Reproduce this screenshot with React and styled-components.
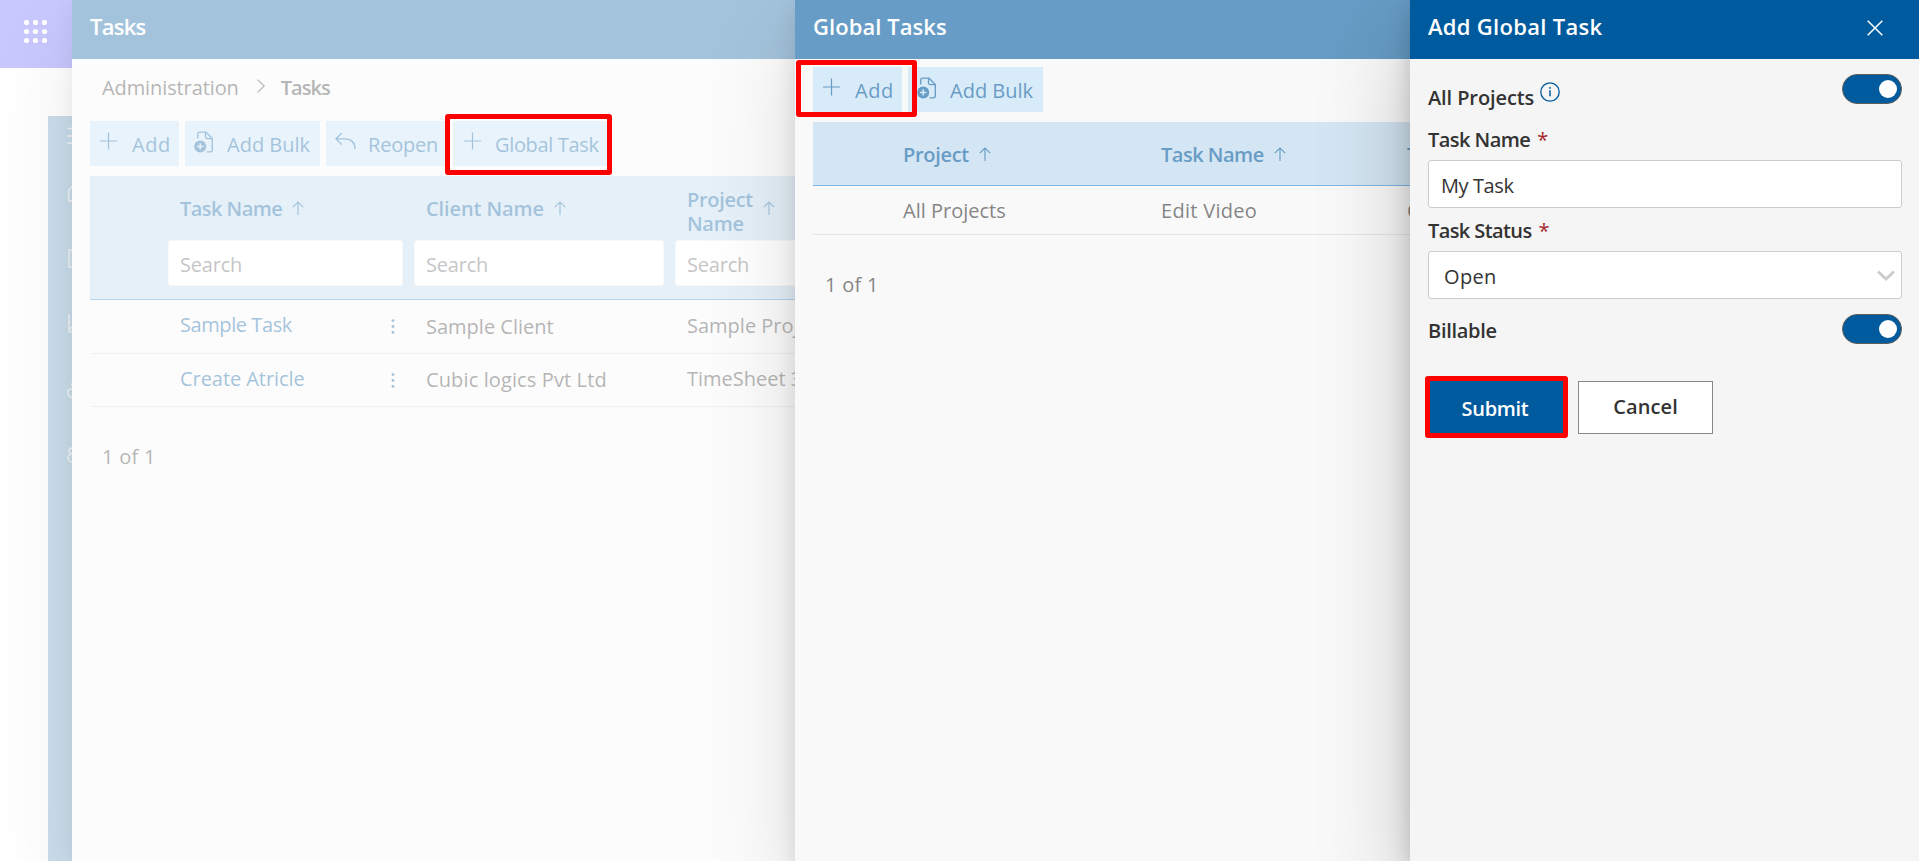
import React from 'react';
import styled, { createGlobalStyle } from 'styled-components';

const PRIMARY = '#005a9e';

const GlobalStyle = createGlobalStyle`
  *, *::before, *::after { box-sizing: border-box; }
  body {
    margin: 0;
    overflow: hidden;
    background: #fff;
    color: #333;
    font-family: "Open Sans", "Noto Sans", sans-serif;
    font-size: 20px;
    line-height: 24px;
  }
`;

const Screen = styled.main`
  position: relative;
  display: flex;
  width: 1919px;
  height: 861px;
  overflow: hidden;
`;

const shadow = (k) =>
  `0 38.4px 86.4px rgba(0,0,0,${0.22 * k}), 0 7.2px 21.6px rgba(0,0,0,${0.18 * k})`;

/* App shell visible at the left of the stacked panels */
const Shell = styled.div`
  display: flex;
  flex-direction: column;
  flex: none;
  width: 72px;
`;

const Launcher = styled.div`
  display: flex;
  align-items: flex-start;
  height: 68px;
  padding: 20px 0 0 24px;
  background: #c8c8ff;
`;

const Rail = styled.nav`
  flex: 1;
  display: flex;
  flex-direction: column;
  margin: 48px 0 0 48px;
  padding: 8px 0 0 19px;
  background: #cbdeec;
  overflow: hidden;
`;

const RailItem = styled.div`
  flex: none;
  height: ${(p) => p.$h}px;
`;

const Panel = styled.section`
  position: relative;
  z-index: ${(p) => p.$level};
  flex: none;
  width: ${(p) => p.$width}px;
  background: #f5f5f5;
  box-shadow: ${(p) => shadow(p.$shadow)};
`;

const Clip = styled.div`
  position: relative;
  height: 100%;
  overflow: hidden;
  &::after {
    content: "";
    position: absolute;
    inset: 0;
    background: rgba(255, 255, 255, ${(p) => p.$veil});
  }
`;

const PanelHeader = styled.header`
  display: flex;
  justify-content: space-between;
  align-items: center;
  height: 59px;
  padding: 0 36px 4px 18px;
  background: ${PRIMARY};
  color: #fff;
`;

const Title = styled.h2`
  margin: 0;
  padding-bottom: 4px;
  font-size: 22px;
  font-weight: 600;
  line-height: 26px;
  letter-spacing: ${(p) => p.$ls || 0}px;
`;

const Text = styled.span`
  white-space: nowrap;
  font-weight: ${(p) => (p.$strong ? 600 : 400)};
  letter-spacing: ${(p) => p.$ls || 0}px;
  margin-top: ${(p) => p.$drop || 0}px;
`;

const Content = styled.div`
  width: 1100px;
  padding: ${(p) => p.$top || 0}px 0 0 18px;
`;

const Breadcrumb = styled.div`
  display: flex;
  align-items: center;
  height: 57px;
  margin-bottom: 5px;
  padding-left: 12px;
  svg { margin: -3px 16px 0 18px; }
`;

const Toolbar = styled.div`
  display: flex;
  gap: 6px;
  height: 45px;
  margin-bottom: 10px;
`;

const ToolButton = styled.button`
  display: flex;
  align-items: center;
  width: ${(p) => p.$width}px;
  padding: 1px 0 0 ${(p) => p.$pad}px;
  border: 0;
  background: #bfdef4;
  color: ${PRIMARY};
  font: inherit;
  text-align: left;
  svg { flex: none; margin-right: ${(p) => p.$gap}px; }
`;

const TableHead = styled.div`
  height: ${(p) => p.$height}px;
  background: #b7d5eb;
  border-bottom: 1px solid #2b88d8;
  color: ${PRIMARY};
`;

const Columns = styled.div`
  display: grid;
  grid-template-columns: ${(p) => p.$cols};
  align-items: center;
  height: ${(p) => p.$height}px;
  color: ${(p) => p.$color || 'inherit'};
`;

const Row = styled(Columns)`
  border-bottom: 1px solid #d5d5d5;
`;

const Cell = styled.div`
  display: flex;
  align-items: center;
  padding-left: ${(p) => p.$pad || 0}px;
  color: ${(p) => (p.$link ? PRIMARY : 'inherit')};
`;

const SortIcon = styled.span`
  display: flex;
  margin-left: 10px;
`;

const TwoLines = styled.span`
  display: grid;
  margin-bottom: -7px;
  width: 66px;
`;

const SearchBox = styled.div`
  width: calc(100% - 11px);
  height: 46px;
  padding: 13px 0 0 11px;
  line-height: 22px;
  border: 1px solid #ececec;
  border-radius: 3px;
  background: #fff;
  color: #5e5e5e;
  letter-spacing: -0.2px;
`;

const MoreButton = styled.span`
  display: flex;
  margin-left: auto;
  margin-right: 19px;
`;

const Pager = styled.div`
  height: ${(p) => p.$height}px;
  padding-left: 12px;
  display: flex;
  align-items: center;
`;

/* Add Global Task form */
const Form = styled.form`
  display: flex;
  flex-direction: column;
  padding: 15px 17px 0 18px;
`;

const ToggleRow = styled.div`
  display: flex;
  justify-content: space-between;
  height: ${(p) => p.$height}px;
`;

const ToggleLabel = styled.label`
  display: flex;
  align-items: flex-start;
  height: 24px;
  margin-top: ${(p) => p.$top}px;
  svg { margin: -4px 0 0 6px; }
`;

const Toggle = styled.span`
  display: flex;
  justify-content: flex-end;
  align-items: center;
  width: 60px;
  height: 30px;
  padding-right: 4px;
  border: 1px solid #5f5e5c;
  border-radius: 15px;
  background: ${PRIMARY};
  &::after {
    content: "";
    width: 18px;
    height: 18px;
    border-radius: 50%;
    background: #fff;
  }
`;

const FieldLabel = styled.label`
  display: flex;
  height: 24px;
  margin-bottom: 8px;
`;

const Required = styled.span`
  margin-left: 7px;
  color: #a4262c;
  font-weight: 400;
`;

const Field = styled.div`
  display: flex;
  align-items: center;
  justify-content: space-between;
  height: 48px;
  margin-bottom: ${(p) => p.$after}px;
  padding: 3px 6px 0 ${(p) => p.$pad}px;
  border: 1px solid #ccc;
  border-radius: 3px;
  background: #fff;
  svg { margin-top: -1px; }
`;

const Actions = styled.div`
  display: flex;
  gap: 15px;
  margin-top: 37px;
`;

const ActionButton = styled.button`
  width: 135px;
  height: 53px;
  padding: ${(p) => p.$padding};
  border: ${(p) => (p.$primary ? '0' : '1px solid #8a8886')};
  background: ${(p) => (p.$primary ? PRIMARY : '#fff')};
  color: ${(p) => (p.$primary ? '#fff' : '#333')};
  font: inherit;
`;

/* Red call-out frame drawn over the panels */
const Callout = styled.div`
  position: absolute;
  z-index: 10;
  left: ${(p) => p.$x}px;
  top: ${(p) => p.$y}px;
  width: ${(p) => p.$w}px;
  height: ${(p) => p.$h}px;
  border: 5px solid #f00;
  border-radius: 3px;
`;

const Waffle = () => (
  <svg width="24" height="24" fill="#fff">
    {[2.5, 11.5, 20.5].map((y) =>
      [2.5, 11.5, 20.5].map((x) => <circle key={`${x}${y}`} cx={x} cy={y} r="2.6" />)
    )}
  </svg>
);

const Stroke = ({ w, h, d, sw = 1.2 }) => (
  <svg width={w} height={h} fill="none" stroke="currentColor" strokeWidth={sw}>
    <path d={d} />
  </svg>
);

const PlusIcon = () => <Stroke w={18} h={24} d="M8.5 0.5V17.5M0 9H17" />;

const BulkIcon = () => (
  <svg width="20" height="26" fill="none" stroke="currentColor" strokeWidth="1.3">
    <path d="M3.7 7.5V3.2Q3.7 1.2 5.7 1.2H12L18.3 7.5V18.8Q18.3 20.8 16.3 20.8H12.6" />
    <path d="M11.5 1.2V5.8Q11.5 7.6 13.3 7.6H18.3" />
    <circle cx="6.2" cy="15.4" r="6" fill="currentColor" stroke="none" />
    <path d="M6.2 12.2V18.6M3 15.4H9.4" stroke="#bfdef4" strokeWidth="1.5" />
  </svg>
);

const UndoIcon = () => <Stroke w={21} h={25} sw={1.3} d="M6.8 1L0.9 6.8L6.8 12.6M1 6.8H9C15.5 6.8 20 9.5 20 17" />;

const ArrowUp = () => (
  <SortIcon>
    <Stroke w={12} h={14} sw={1.1} d="M6 14V1M0.8 6.2L6 1L11.2 6.2" />
  </SortIcon>
);

const InfoIcon = () => (
  <svg width="20" height="20" fill="none" stroke={PRIMARY} strokeWidth="1.3">
    <circle cx="10" cy="10" r="9.2" />
    <path d="M10 8.2V14.2" strokeWidth="1.5" />
    <circle cx="10" cy="5.9" r="0.9" fill={PRIMARY} stroke="none" />
  </svg>
);

const Dots = () => (
  <MoreButton>
    <svg width="4" height="15" fill="currentColor">
      <circle cx="2" cy="1.6" r="1.4" />
      <circle cx="2" cy="7.5" r="1.4" />
      <circle cx="2" cy="13.4" r="1.4" />
    </svg>
  </MoreButton>
);

const RAIL = [
  { h: 61, d: 'M0.5 4.5H20M0.5 12H20M0.5 19H20' },
  { h: 64, d: 'M6 1L2.5 4Q1.6 5 1.6 6V14.5Q1.6 16 3.5 16H16' },
  { h: 65, d: 'M2 1H18V18H2ZM5.5 1V18' },
  { h: 69, d: 'M2 0V18H18M2 16L6 12' },
  { h: 64, d: 'M5 0V3M5 6C1 6 0 8 1 11C2 14 5 15 8 15' },
  { h: 60, d: 'M5 1A3 3 0 1 0 5 7A4 4 0 1 0 5 15' },
];

const COLS_TASKS = '78px 246px 261px 261px';
const COLS_GLOBAL = '90px 258px 246px 200px';

const ROWS = [
  { h: 54, task: ['Sample Task', -0.42], client: ['Sample Client', 0], project: 'Sample Project', shift: -4 },
  { h: 53, task: ['Create Atricle', -0.06], client: ['Cubic logics Pvt Ltd', 0.12], project: 'TimeSheet 365', shift: -3 },
];

export default function App() {
  return (
    <Screen>
      <GlobalStyle />
      <Shell>
        <Launcher><Waffle /></Launcher>
        <Rail>
          {RAIL.map((r) => (
            <RailItem key={r.d} $h={r.h}>
              <svg width="20" height="20" fill="none" stroke="#f3f6f8" strokeWidth="1.5"><path d={r.d} /></svg>
            </RailItem>
          ))}
        </Rail>
      </Shell>

      <Panel $level={1} $width={723} $shadow={0.36}>
        <Clip $veil={0.64}>
          <PanelHeader><Title $ls={-0.75}>Tasks</Title></PanelHeader>
          <Content>
            <Breadcrumb>
              <Text $ls={-0.1}>Administration</Text>
              <Stroke w={8} h={14} d="M0.6 0.6L7.2 7L0.6 13.4" />
              <Text $strong $ls={-1}>Tasks</Text>
            </Breadcrumb>
            <Toolbar>
              <ToolButton $width={89} $pad={10} $gap={14}><PlusIcon /><Text $ls={0.5} $drop={2}>Add</Text></ToolButton>
              <ToolButton $width={135} $pad={9} $gap={13}><BulkIcon /><Text $ls={0} $drop={2}>Add Bulk</Text></ToolButton>
              <ToolButton $width={121} $pad={9} $gap={12}><UndoIcon /><Text $ls={-0.2} $drop={2}>Reopen</Text></ToolButton>
              <ToolButton $width={156} $pad={11} $gap={13}><PlusIcon /><Text $ls={-0.35} $drop={2}>Global Task</Text></ToolButton>
            </Toolbar>
            <TableHead $height={124}>
              <Columns $cols={COLS_TASKS} $height={64}>
                <span />
                <Cell $pad={12}><Text $strong $ls={-0.54} $drop={2}>Task Name</Text><ArrowUp /></Cell>
                <Cell $pad={12}><Text $strong $ls={-0.1} $drop={2}>Client Name</Text><ArrowUp /></Cell>
                <Cell $pad={12}>
                  <TwoLines><Text $strong $ls={-0.3}>Project</Text><Text $strong $ls={-0.3}>Name</Text></TwoLines>
                  <ArrowUp />
                </Cell>
              </Columns>
              <Columns $cols={COLS_TASKS} $height={46}>
                <span />
                <SearchBox>Search</SearchBox>
                <SearchBox>Search</SearchBox>
                <SearchBox>Search</SearchBox>
              </Columns>
            </TableHead>
            {ROWS.map((r) => (
              <Row key={r.project} $cols={COLS_TASKS} $height={r.h}>
                <span />
                <Cell $pad={12} $link><Text $ls={r.task[1]} $drop={r.shift}>{r.task[0]}</Text><Dots /></Cell>
                <Cell $pad={12}><Text $ls={r.client[1]}>{r.client[0]}</Text></Cell>
                <Cell $pad={12}><Text $drop={-2}>{r.project}</Text></Cell>
              </Row>
            ))}
            <Pager $height={99}><Text $ls={0.28}>1 of 1</Text></Pager>
          </Content>
        </Clip>
      </Panel>

      <Panel $level={2} $width={615} $shadow={0.6}>
        <Clip $veil={0.4}>
          <PanelHeader><Title $ls={0.06}>Global Tasks</Title></PanelHeader>
          <Content $top={8}>
            <Toolbar>
              <ToolButton $width={89} $pad={10} $gap={14}><PlusIcon /><Text $ls={0.5} $drop={2}>Add</Text></ToolButton>
              <ToolButton $width={135} $pad={9} $gap={13}><BulkIcon /><Text $ls={0} $drop={2}>Add Bulk</Text></ToolButton>
            </Toolbar>
            <TableHead $height={64}>
              <Columns $cols={COLS_GLOBAL} $height={64}>
                <span />
                <Cell><Text $strong $ls={-0.3} $drop={2}>Project</Text><ArrowUp /></Cell>
                <Cell><Text $strong $ls={-0.5} $drop={2}>Task Name</Text><ArrowUp /></Cell>
                <Cell><Text $strong $ls={-0.6} $drop={2}>Task Status</Text><ArrowUp /></Cell>
              </Columns>
            </TableHead>
            <Row $cols={COLS_GLOBAL} $height={49}>
              <span />
              <Text $ls={0} $drop={2}>All Projects</Text>
              <Text $ls={0.3} $drop={2}>Edit Video</Text>
              <Text $ls={0.33} $drop={2}>Open</Text>
            </Row>
            <Pager $height={99}><Text $ls={0.28}>1 of 1</Text></Pager>
          </Content>
        </Clip>
      </Panel>

      <Panel $level={3} $width={509} $shadow={1}>
        <PanelHeader>
          <Title $ls={0.3}>Add Global Task</Title>
          <Stroke w={16} h={16} sw={1.5} d="M0.7 0.7L15.3 15.3M15.3 0.7L0.7 15.3" />
        </PanelHeader>
        <Form>
          <ToggleRow $height={54}>
            <ToggleLabel $top={12}><Text $strong $ls={-0.1}>All Projects</Text><InfoIcon /></ToggleLabel>
            <Toggle />
          </ToggleRow>
          <FieldLabel><Text $strong $ls={-0.55}>Task Name</Text><Required>*</Required></FieldLabel>
          <Field $pad={12} $after={11}><Text $ls={-0.4}>My Task</Text></Field>
          <FieldLabel><Text $strong $ls={-0.6}>Task Status</Text><Required>*</Required></FieldLabel>
          <Field $pad={15} $after={15}>
            <Text $ls={0.33}>Open</Text>
            <svg width="18" height="12" fill="none" stroke="#ccc" strokeWidth="3"><path d="M1 1.5L9 9L17 1.5" /></svg>
          </Field>
          <ToggleRow $height={30}>
            <ToggleLabel $top={5}><Text $strong $ls={-0.3}>Billable</Text></ToggleLabel>
            <Toggle />
          </ToggleRow>
          <Actions>
            <ActionButton type="button" $primary $padding="2px 1px 0 0"><Text $strong $ls={-0.3}>Submit</Text></ActionButton>
            <ActionButton type="button" $padding="0 0 1px"><Text $strong $ls={0.12}>Cancel</Text></ActionButton>
          </Actions>
        </Form>
      </Panel>

      <Callout $x={445} $y={114} $w={167} $h={61} />
      <Callout $x={796} $y={60} $w={121} $h={57} />
      <Callout $x={1425} $y={376} $w={143} $h={62} />
    </Screen>
  );
}
